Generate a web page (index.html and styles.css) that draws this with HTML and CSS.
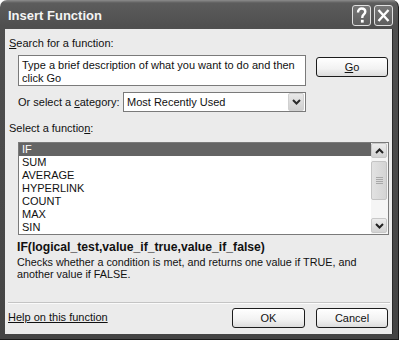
FILE: index.html
```html
<!DOCTYPE html>
<html>
<head>
<meta charset="utf-8">
<link rel="stylesheet" href="styles.css">
</head>
<body>
<div class="window">
  <div class="titlebar">
    <span class="title">Insert Function</span>
    <div class="title-btns">
      <span class="tbtn"><svg width="17" height="19" viewBox="0 0 17 19"><path d="M5 6.5 C5 3.5 7 2.5 8.7 2.5 C10.6 2.5 12.3 3.7 12.3 5.8 C12.3 8.3 9.3 8.6 9.3 11.3 L9.3 12" fill="none" stroke="#fff" stroke-width="2.4"/><rect x="7.9" y="13.8" width="2.8" height="2.8" fill="#fff"/></svg></span>
      <span class="tbtn"><svg width="17" height="19" viewBox="0 0 17 19"><path d="M3.5 4 L13.5 15 M13.5 4 L3.5 15" stroke="#fff" stroke-width="2.4" fill="none"/></svg></span>
    </div>
  </div>
  <div class="panel">
    <div class="lbl lbl-search"><u>S</u>earch for a function:</div>
    <div class="search-row">
      <div class="textarea">Type a brief description of what you want to do and then click Go</div>
      <div class="btn btn-go"><u>G</u>o</div>
    </div>
    <div class="cat-row">
      <span class="cat-lbl">Or select a <u>c</u>ategory:</span>
      <div class="select">
        <span class="select-val">Most Recently Used</span>
        <span class="sel-arrow"><svg width="9" height="6" viewBox="0 0 9 6"><path d="M1 1 L4.5 4.5 L8 1" fill="none" stroke="#2a2a2a" stroke-width="2"/></svg></span>
      </div>
    </div>
    <div class="lbl lbl-func">Select a functio<u>n</u>:</div>
    <div class="listbox">
      <ul class="items">
        <li class="sel">IF</li>
        <li>SUM</li>
        <li>AVERAGE</li>
        <li>HYPERLINK</li>
        <li>COUNT</li>
        <li>MAX</li>
        <li>SIN</li>
      </ul>
      <div class="scrollbar">
        <span class="sb-btn"><svg width="9" height="6" viewBox="0 0 9 6"><path d="M1 5 L4.5 1.5 L8 5" fill="none" stroke="#222" stroke-width="2"/></svg></span>
        <span class="sb-thumb"><span class="grip"></span></span>
        <span class="sb-track"></span>
        <span class="sb-btn"><svg width="9" height="6" viewBox="0 0 9 6"><path d="M1 1 L4.5 4.5 L8 1" fill="none" stroke="#222" stroke-width="2"/></svg></span>
      </div>
    </div>
    <div class="signature">IF(logical_test,value_if_true,value_if_false)</div>
    <div class="desc">Checks whether a condition is met, and returns one value if TRUE, and<br>another value if FALSE.</div>
    <div class="sep"></div>
    <div class="footer">
      <span class="help">Help on this function</span>
      <div class="footer-btns">
        <div class="btn btn-ok">OK</div>
        <div class="btn btn-cancel">Cancel</div>
      </div>
    </div>
  </div>
</div>
</body>
</html>
```
FILE: styles.css
```css
html, body {
  margin: 0;
  padding: 0;
  background: #ffffff;
}
body {
  width: 399px;
  height: 340px;
  overflow: hidden;
  font-family: "Liberation Sans", Arial, sans-serif;
  font-size: 11px;
  color: #111;
}
.window {
  width: 399px;
  height: 340px;
  box-sizing: border-box;
  border-radius: 7px 7px 0 0;
  background: linear-gradient(#8c8c8c 0, #5c5c5c 3px, #4f4f4f 26px, #444 100%);
  border-right: 1px solid #1a1a1a;
  border-bottom: 1px solid #1a1a1a;
  display: flex;
  flex-direction: column;
  padding: 0 5px 5px 5px;
}
.titlebar {
  height: 29px;
  display: flex;
  align-items: flex-start;
  justify-content: space-between;
  flex: none;
}
.title {
  color: #f4f4f4;
  font-family: "Liberation Sans", Arial, sans-serif;
  font-weight: bold;
  font-size: 13px;
  margin-top: 8px;
  margin-left: 3px;
}
.title-btns {
  display: flex;
  gap: 3px;
  margin-top: 5px;
  margin-right: 0;
}
.tbtn {
  width: 19px;
  height: 21px;
  box-sizing: border-box;
  border: 1px solid #e0e0e0;
  border-radius: 3px;
  background: linear-gradient(#777, #5e5e5e);
  display: flex;
  align-items: center;
  justify-content: center;
}
.tbtn svg { display: block; }
.panel {
  flex: 1;
  background: #ebebeb;
  display: flex;
  flex-direction: column;
  border-right: 1px solid #2a2a2a;
}
.lbl {
  line-height: 13px;
  height: 13px;
  padding-left: 4px;
}
.lbl-search { margin-top: 8px; }
.search-row {
  margin-top: 5px;
  display: flex;
  padding-left: 13px;
  gap: 10px;
}
.textarea {
  width: 288px;
  height: 31px;
  box-sizing: border-box;
  border: 1px solid #7a7a7a;
  background: #fff;
  padding: 3px 3px 0 3px;
  line-height: 12.5px;
}
.btn {
  box-sizing: border-box;
  height: 20px;
  border: 1px solid #1c1c1c;
  border-radius: 3px;
  background: linear-gradient(#ffffff, #f2f2f2 60%, #dcdcdc);
  display: flex;
  align-items: center;
  justify-content: center;
}
.btn-go {
  width: 72px;
  margin-top: 2px;
}
.cat-row {
  margin-top: 6px;
  display: flex;
  align-items: center;
  padding-left: 13px;
  height: 20px;
}
.cat-lbl {
  width: 105px;
}
.select {
  width: 183px;
  height: 20px;
  box-sizing: border-box;
  border: 1px solid #7a7a7a;
  background: #fff;
  display: flex;
  align-items: center;
  justify-content: space-between;
  padding: 0 1px 0 3px;
}
.sel-arrow {
  width: 16px;
  height: 18px;
  box-sizing: border-box;
  border: 1px solid #d0d0d0;
  border-radius: 2px;
  background: linear-gradient(#e8e8e8, #cfcfcf);
  display: flex;
  align-items: center;
  justify-content: center;
}
.lbl-func { margin-top: 10px; }
.listbox {
  margin-top: 7px;
  margin-left: 13px;
  width: 371px;
  height: 93px;
  box-sizing: border-box;
  border: 1px solid #7a7a7a;
  background: #fff;
  display: flex;
}
.items {
  list-style: none;
  margin: 0;
  padding: 0;
  flex: 1;
}
.items li {
  height: 13px;
  line-height: 13px;
  padding-left: 3px;
}
.items li.sel {
  background: #646464;
  color: #fff;
}
.scrollbar {
  width: 17px;
  background: #f5f5f5;
  display: flex;
  flex-direction: column;
  padding: 0 1px 1px 0;
  box-sizing: border-box;
}
.sb-btn {
  height: 15px;
  box-sizing: border-box;
  border: 1px solid #c8c8c8;
  border-radius: 2px;
  background: linear-gradient(#ececec, #d2d2d2);
  display: flex;
  align-items: center;
  justify-content: center;
}
.sb-thumb {
  margin-top: 3px;
  height: 39px;
  box-sizing: border-box;
  border: 1px solid #c4c4c4;
  border-radius: 2px;
  background: linear-gradient(90deg, #e2e2e2, #d4d4d4);
  display: flex;
  align-items: center;
  justify-content: center;
}
.grip {
  width: 7px;
  height: 7px;
  background: repeating-linear-gradient(#a8a8a8 0 1px, transparent 1px 2px);
}
.sb-track { flex: 1; }
.signature {
  margin-top: 6px;
  padding-left: 12px;
  font-weight: bold;
  font-size: 12.2px;
  line-height: 13px;
}
.desc {
  margin-top: 2px;
  padding-left: 12px;
  line-height: 12px;
  font-size: 10.8px;
}
.sep {
  margin-top: 22px;
  margin-left: 3px;
  width: 382px;
  height: 1px;
  background: #c4c4c4;
  border-bottom: 1px solid #fafafa;
}
.footer {
  margin-top: 4px;
  display: flex;
  justify-content: space-between;
  align-items: center;
  padding-left: 3px;
  padding-right: 4px;
}
.help {
  text-decoration: underline;
  margin-top: -3px;
}
.footer-btns {
  display: flex;
  gap: 11px;
}
.btn-ok { width: 73px; }
.btn-cancel { width: 72px; }
```
